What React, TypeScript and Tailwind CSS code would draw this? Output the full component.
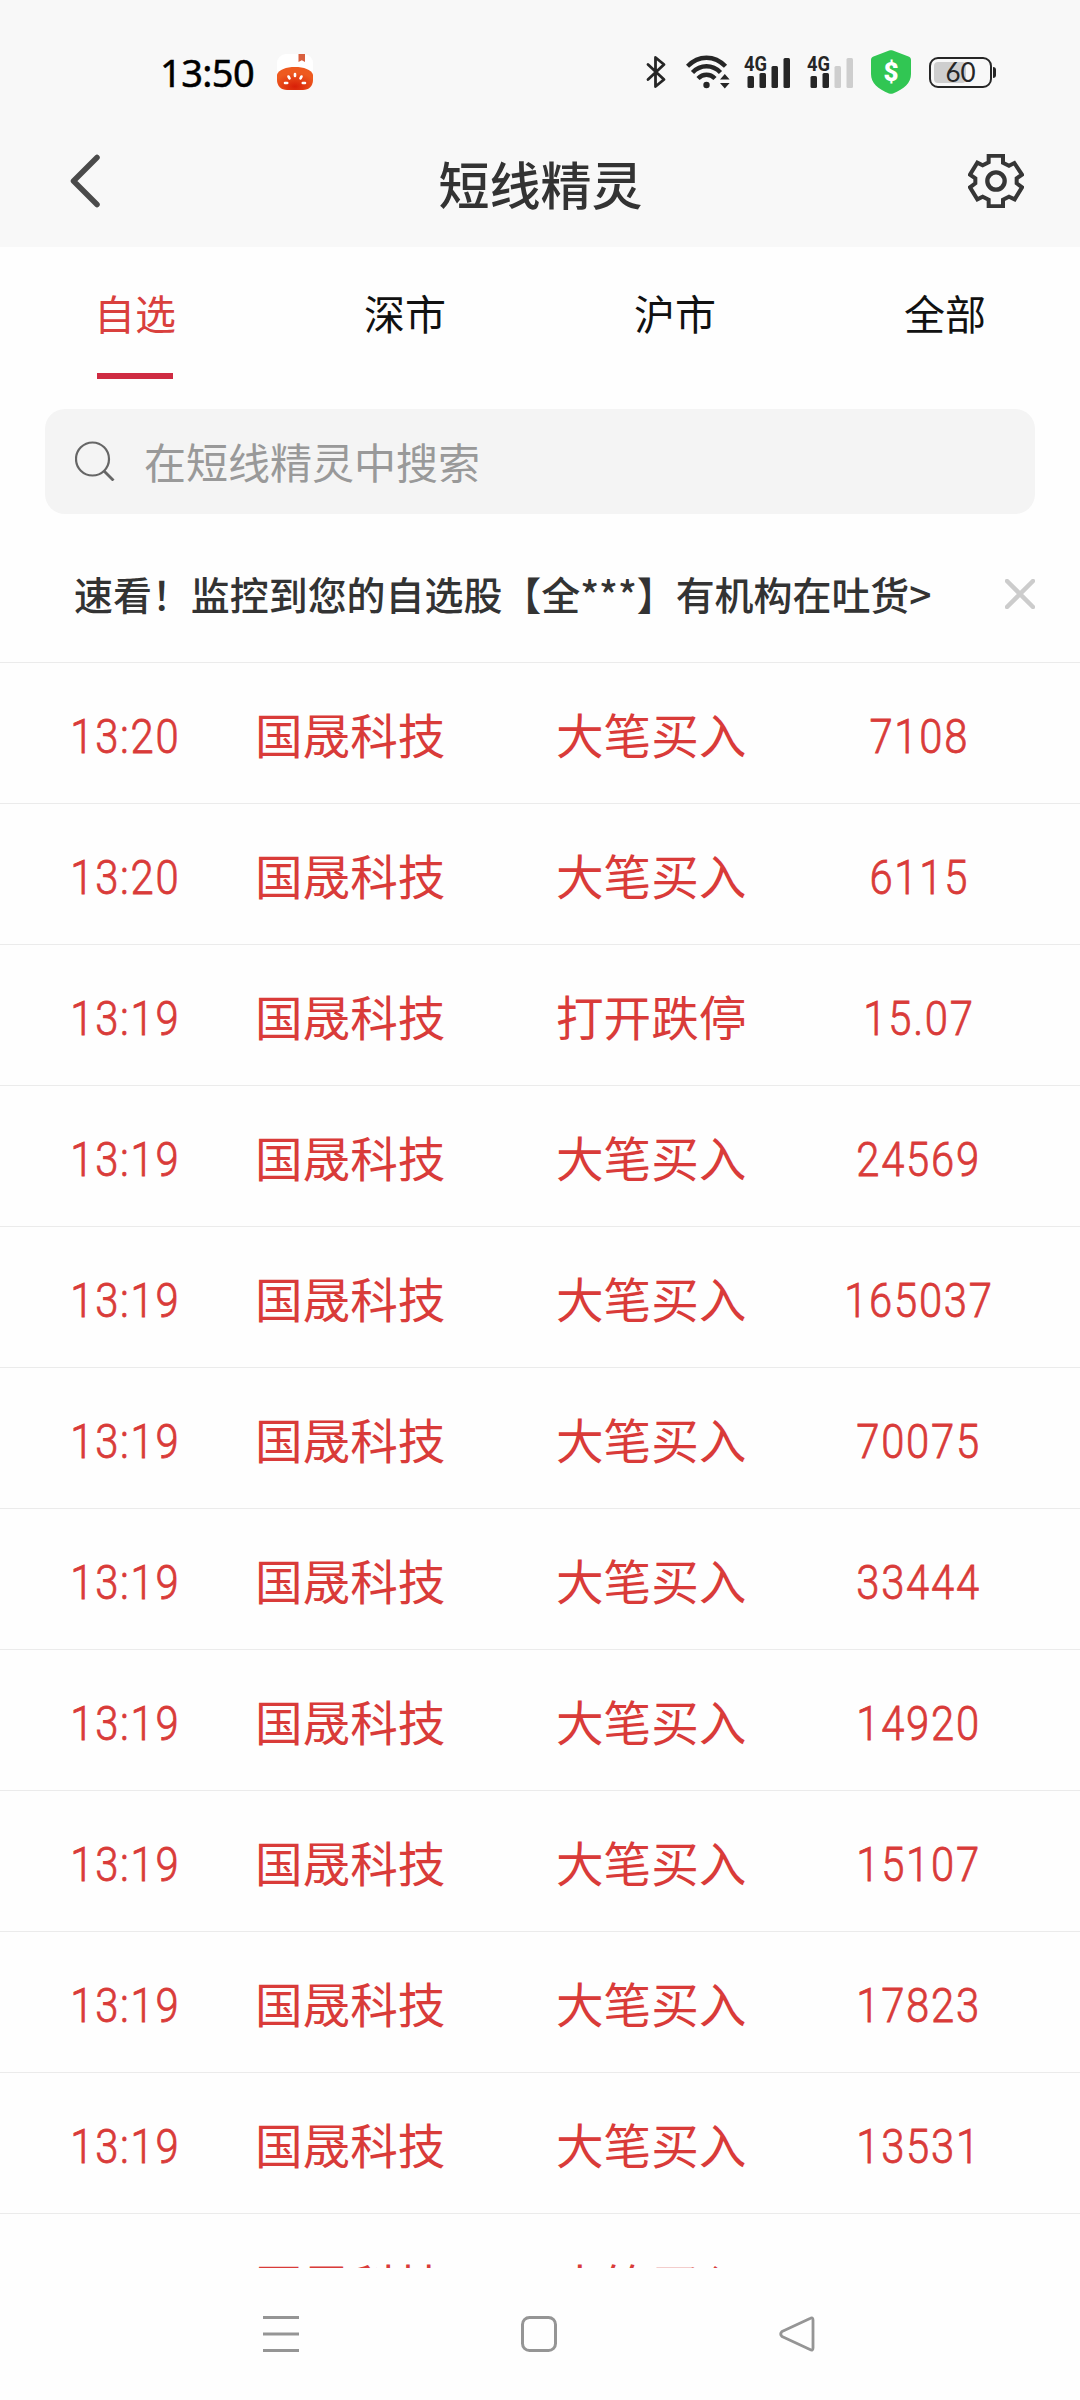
import clsx from "clsx";

const TABS = ["自选", "深市", "沪市", "全部"];

const ALERTS = [
  { time: "13:20", name: "国晟科技", type: "大笔买入", value: "7108" },
  { time: "13:20", name: "国晟科技", type: "大笔买入", value: "6115" },
  { time: "13:19", name: "国晟科技", type: "打开跌停", value: "15.07" },
  { time: "13:19", name: "国晟科技", type: "大笔买入", value: "24569" },
  { time: "13:19", name: "国晟科技", type: "大笔买入", value: "165037" },
  { time: "13:19", name: "国晟科技", type: "大笔买入", value: "70075" },
  { time: "13:19", name: "国晟科技", type: "大笔买入", value: "33444" },
  { time: "13:19", name: "国晟科技", type: "大笔买入", value: "14920" },
  { time: "13:19", name: "国晟科技", type: "大笔买入", value: "15107" },
  { time: "13:19", name: "国晟科技", type: "大笔买入", value: "17823" },
  { time: "13:19", name: "国晟科技", type: "大笔买入", value: "13531" },
  { time: "", name: "国晟科技", type: "大笔买入", value: "" },
];

function TomatoIcon() {
  return (
    <svg className="ml-6 h-9 w-9" viewBox="0 0 36 36">
      <defs>
        <radialGradient id="tomato" cx="0.5" cy="0.85" r="0.6">
          <stop offset="0" stopColor="#d81f08" />
          <stop offset="1" stopColor="#ee5a1f" />
        </radialGradient>
      </defs>
      <rect width="36" height="36" rx="9" fill="#fff" />
      <path d="M21.500 0H28v8l-3.200-1.800L21.500 8z" fill="#d9603f" />
      <path
        d="M0 20.500C2 15.500 9 13 18 13s16 2.500 18 7.500V26c0 6-4 10-10 10H10C4 36 0 32 0 26z"
        fill="url(#tomato)"
      />
      <g stroke="#fff" strokeWidth="2.600" strokeLinecap="round">
        <path d="M18 20v2M11.500 22.500l1 1.800M24.500 22.500l-1 1.800M8 29h2.200M28 29h-2.200" />
      </g>
    </svg>
  );
}

function BluetoothIcon() {
  return (
    <svg className="h-[34px] w-[21px]" viewBox="0 0 21 34" fill="none">
      <path
        d="M2 9.500l16 15L9.500 31.500V2.500L18 9.500l-16 15"
        stroke="#262626"
        strokeWidth="2.800"
        strokeLinejoin="round"
        strokeLinecap="round"
      />
    </svg>
  );
}

function WifiIcon() {
  return (
    <svg className="ml-[19px] h-[34px] w-11" viewBox="0 0 44 34">
      <g fill="none" stroke="#262626" strokeWidth="4.400">
        <path d="M1.500 11.300C12.500-.2 28.500-.2 39.500 11.300" />
        <path d="M6.500 17.500c8-8.300 20-8.300 28 0" />
        <path d="M12 23.500c5-5 12-5 17 0" />
      </g>
      <circle cx="20.500" cy="30" r="3.200" fill="#262626" />
      <path d="M34 24.500l4.800-5.500 4.800 5.500zM34 28l4.800 5.500 4.800-5.500z" fill="#262626" />
    </svg>
  );
}

function SignalIcon({ weak }: { weak?: boolean }) {
  const tail = weak ? "#cecece" : "#262626";
  return (
    <svg className="-mt-2 h-[42px] w-[47px]" viewBox="0 -8 47 42">
      <text
        x="0"
        y="16"
        fontFamily="Roboto, sans-serif"
        fontWeight="700"
        fontSize="21"
        textLength="23"
        lengthAdjust="spacingAndGlyphs"
        fill="#262626"
      >
        4G
      </text>
      <rect x="3.500" y="21" width="6.500" height="12" rx="1.500" fill="#262626" />
      <rect x="15.500" y="18" width="6.500" height="15" rx="1.500" fill="#262626" />
      <rect x="27.500" y="11" width="6.500" height="22" rx="1.500" fill={tail} />
      <rect x="39.500" y="3" width="6.500" height="30" rx="1.500" fill={tail} />
    </svg>
  );
}

function ShieldIcon() {
  return (
    <svg className="ml-[17px] h-[44px] w-10" viewBox="0 0 40 44">
      <path
        d="M18.200.6c1.200-.6 2.400-.6 3.600 0L37.500 6.500C39 7 40 8 40 10v14c0 9-7 15-18 19.400-1.300.5-2.700.5-4 0C7 39 0 33 0 24V10c0-2 1-3 2.500-3.500z"
        fill="#31c653"
      />
      <text
        x="20"
        y="31"
        textAnchor="middle"
        fontFamily="Roboto, sans-serif"
        fontWeight="900"
        fontSize="26"
        fill="#fff"
      >
        $
      </text>
    </svg>
  );
}

function Battery() {
  return (
    <div className="ml-[18px] flex items-center gap-px">
      <div className="relative flex h-[31px] w-[63px] items-center justify-center rounded-[9px] border-[2.500px] border-[#262626]">
        <div className="absolute top-[3px] bottom-[3px] left-[3px] w-8 rounded-[4px] bg-[#cecece]" />
        <span className="relative font-['Lato'] text-[26px] leading-none font-normal text-[#262626]">
          60
        </span>
      </div>
      <div className="h-[11px] w-[3px] rounded-r bg-[#262626]" />
    </div>
  );
}

function StatusBar() {
  return (
    <div className="flex h-36 items-center pl-[160px]">
      <span className="w-[93px] font-['Noto_Sans'] text-[38px] leading-none font-normal tracking-[-0.6px] text-black [-webkit-text-stroke:0.5px_black]">
        13:50
      </span>
      <TomatoIcon />
      <div className="ml-[333px] flex items-center">
        <BluetoothIcon />
        <WifiIcon />
        <div className="ml-[14px] flex gap-4">
          <SignalIcon />
          <SignalIcon weak />
        </div>
        <ShieldIcon />
        <Battery />
      </div>
    </div>
  );
}

function Header() {
  return (
    <div className="flex h-[103px] items-start justify-between pr-14 pl-[69px]">
      <svg className="mt-[10px] h-[54px] w-8" viewBox="0 0 32 54" fill="none">
        <path
          d="M28 3.500L4.500 27 28 50.500"
          stroke="#4a4a4a"
          strokeWidth="5.500"
          strokeLinecap="round"
          strokeLinejoin="round"
        />
      </svg>
      <h1 className="ml-3 pt-[13px] text-[51px] leading-[52px] font-medium text-[#333]">
        短线精灵
      </h1>
      <svg
        className="mt-[10px] h-[54px] w-14"
        viewBox="84 72 168 162"
        fill="none"
        stroke="#363636"
        strokeWidth="12"
      >
        <path d="M146 77.500h43V98l18 9 16-8 23 35-16 11v15l16 12-22 36-17-8-18 9v19.500h-43V209l-18-9-16 8-22-36 16-12v-15l-16-11 22-36 16 8 18-9z" />
        <circle cx="168" cy="153" r="26" strokeWidth="13" />
      </svg>
    </div>
  );
}

function Digits({ children }: { children: string }) {
  return (
    <span className="inline-block scale-x-[0.87] font-['Roboto'] text-[48px] font-light tracking-[2px] whitespace-nowrap [-webkit-text-stroke:0.8px_#d93b39]">
      {children}
    </span>
  );
}

export default function App() {
  return (
    <div className="flex h-[2400px] w-[1080px] flex-col overflow-hidden bg-[#fefefe] font-['Noto_Sans_CJK_SC',sans-serif]">
      <header className="h-[247px] shrink-0 bg-[#f8f8f8]">
        <StatusBar />
        <Header />
      </header>

      {/* Tabs */}
      <nav className="grid h-[162px] shrink-0 grid-cols-4">
        {TABS.map((tab, i) => (
          <div key={tab} className="flex flex-col items-center pt-[35px]">
            <span
              className={clsx(
                "text-[41px] leading-[60px]",
                i === 0 ? "text-[#d9403d]" : "text-[#111]",
              )}
            >
              {tab}
            </span>
            {i === 0 && <div className="mt-[31px] h-[6px] w-[76px] bg-[#cf2b42]" />}
          </div>
        ))}
      </nav>

      {/* Search */}
      <div className="mx-[45px] flex h-[105px] shrink-0 items-center rounded-[20px] bg-[#f4f4f4] pl-[30px]">
        <svg className="mb-px h-10 w-10" viewBox="0 0 40 40" fill="none" stroke="#666" strokeWidth="2.200">
          <circle cx="17.500" cy="18" r="16.500" />
          <path d="M29 30l9.500 9.500" strokeWidth="2.800" />
        </svg>
        <span className="ml-[29px] pb-[2px] text-[42px] leading-[60px] text-[#999]">
          在短线精灵中搜索
        </span>
      </div>

      {/* Notice */}
      <div className="flex h-[149px] shrink-0 items-center justify-between border-b border-[#ebebeb] pr-[45px] pl-[74px]">
        <p className="pt-[10px] text-[38.950px] leading-[56px] font-medium whitespace-nowrap text-[#333]">
          速看！监控到您的自选股【全***】有机构在吐货&gt;
        </p>
        <svg className="mt-[11px] h-[30px] w-[30px]" viewBox="0 0 30 30">
          <path
            d="M2 2l26 26M28 2L2 28"
            stroke="#ccc"
            strokeWidth="4.500"
            strokeLinecap="round"
          />
        </svg>
      </div>

      {/* Alerts, the last row is cut off by the navigation bar */}
      <ul className="h-[1605px] shrink-0 overflow-hidden text-[#d93b39]">
        {ALERTS.map((alert, i) => (
          <li
            key={i}
            className="flex h-[141px] items-center border-b border-[#ebebeb] text-[47.600px] leading-[70px]"
          >
            <div className="flex w-[250px] justify-center pt-[7px]">
              <Digits>{alert.time}</Digits>
            </div>
            <div className="w-[200px] pt-[2px] whitespace-nowrap">
              <span className="ml-[5px]">{alert.name}</span>
            </div>
            <div className="ml-[99px] w-[202px] pt-[2px] whitespace-nowrap">
              <span className="ml-[7px]">{alert.type}</span>
            </div>
            <div className="ml-[18px] flex w-[300px] justify-center pt-[7px]">
              <Digits>{alert.value}</Digits>
            </div>
          </li>
        ))}
      </ul>

      {/* System navigation */}
      <footer className="flex flex-1 items-center pl-[263px]">
        <svg className="h-9 w-9" viewBox="0 0 36 36" stroke="#959595" strokeWidth="3">
          <path d="M0 1.500h36M0 18h36M0 34.500h36" />
        </svg>
        <svg
          className="ml-[222px] h-9 w-9"
          viewBox="0 0 36 36"
          fill="none"
          stroke="#959595"
          strokeWidth="3"
        >
          <rect x="1.500" y="1.500" width="33" height="33" rx="7" />
        </svg>
        <svg
          className="ml-[222px] h-9 w-9"
          viewBox="0 0 36 36"
          fill="none"
          stroke="#959595"
          strokeWidth="2.800"
          strokeLinejoin="round"
        >
          <path d="M31 2.500L3 15.500q-2.500 2.500 0 5L31 33.500q3 1.500 3-1.500V4q0-3-3-1.500z" />
        </svg>
      </footer>
    </div>
  );
}
